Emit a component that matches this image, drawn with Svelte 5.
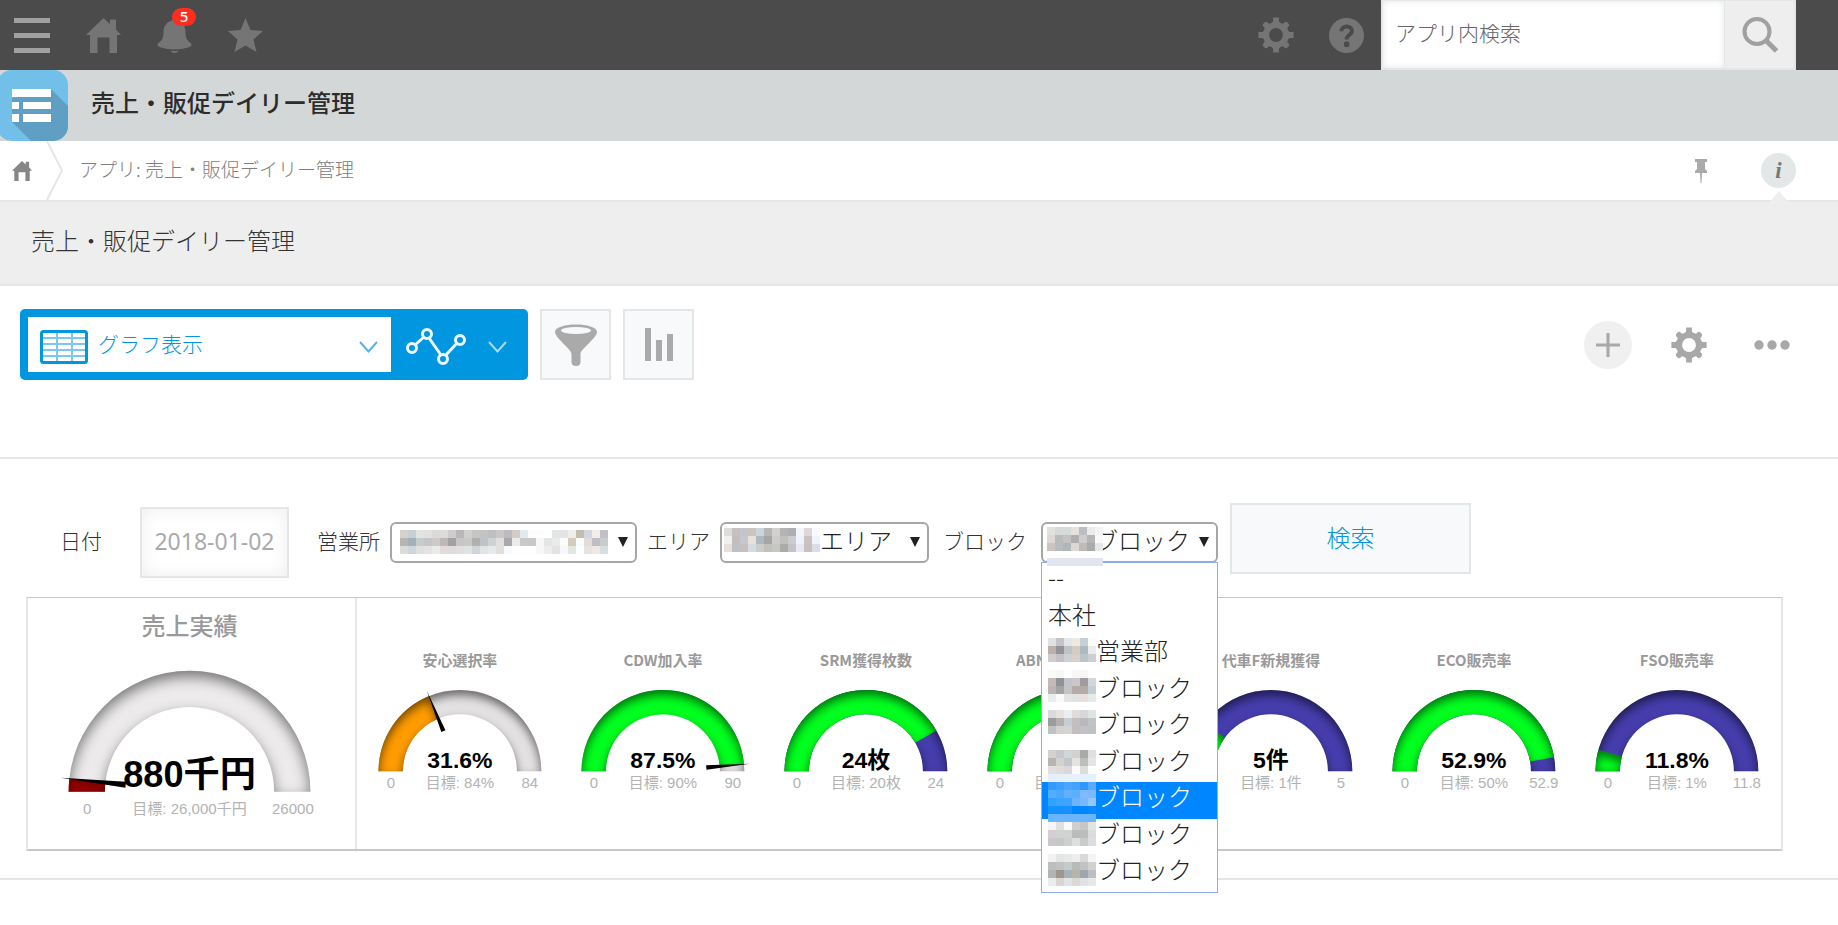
<script>
  let keyword = $state('');
  let date = $state('2018-01-02');
  let office = $state('office');
  let area = $state('area');
  let block = $state('b7');

  const options = [
    { id: 'b1', label: '--' },
    { id: 'b2', label: '本社' },
    { id: 'b3', label: '営業部', masked: true },
    { id: 'b4', label: 'ブロック', masked: true },
    { id: 'b5', label: 'ブロック', masked: true },
    { id: 'b6', label: 'ブロック', masked: true },
    { id: 'b7', label: 'ブロック', masked: true },
    { id: 'b8', label: 'ブロック', masked: true },
    { id: 'b9', label: 'ブロック', masked: true }
  ];

  const GREEN = '#00ff1e';
  const PURPLE = '#453dac';
  const GRAY = '#e4e1e3';

  const gauges = [
    { title: '安心選択率', value: '31.6%', goal: '84%', max: '84', rate: 0.376, color: '#ff9c00', rest: GRAY, needle: true },
    { title: 'CDW加入率', value: '87.5%', goal: '90%', max: '90', rate: 0.972, color: GREEN, rest: GRAY, needle: true },
    { title: 'SRM獲得枚数', value: '24枚', goal: '20枚', max: '24', rate: 0.833, color: GREEN, rest: PURPLE },
    { title: 'ABN新規獲得数', value: '', goal: '20枚', max: '', rate: 0.833, color: GREEN, rest: PURPLE },
    { title: '代車F新規獲得', value: '5件', goal: '1件', max: '5', rate: 0.2, color: GREEN, rest: PURPLE },
    { title: 'ECO販売率', value: '52.9%', goal: '50%', max: '52.9', rate: 0.945, color: GREEN, rest: PURPLE },
    { title: 'FSO販売率', value: '11.8%', goal: '1%', max: '11.8', rate: 0.0847, color: GREEN, rest: PURPLE }
  ];

  function point(cx, cy, r, rate) {
    const a = Math.PI * (1 - rate);
    return [cx + r * Math.cos(a), cy - r * Math.sin(a)];
  }

  function ring(cx, cy, r, from, to) {
    const inner = r * 0.7;
    const [ax, ay] = point(cx, cy, r, from);
    const [bx, by] = point(cx, cy, r, to);
    const [ex, ey] = point(cx, cy, inner, to);
    const [dx, dy] = point(cx, cy, inner, from);
    return `M${ax} ${ay}A${r} ${r} 0 0 1 ${bx} ${by}L${ex} ${ey}A${inner} ${inner} 0 0 0 ${dx} ${dy}Z`;
  }

  function needlePath(cx, cy, r, rate, base, half) {
    const a = Math.PI * (1 - rate);
    const [tx, ty] = point(cx, cy, r * 1.07, rate);
    const [bx, by] = point(cx, cy, base, rate);
    const nx = Math.sin(a) * half;
    const ny = Math.cos(a) * half;
    return `M${tx} ${ty}L${bx + nx} ${by + ny}L${bx - nx} ${by - ny}Z`;
  }

  const officeMask = [
    'd3d2cf c6cfd2 e2e4e4 e3e1e0 dbdada dcdcdb cfcccd b9b7b8 d0d0cf c6c6c6 c3c3c1 bebfc0 c8c8c8 bcbabe d2ccc9 e2e9f0 fdfdfd fdfdfd fefefc e4e6e6 e3e4e3 eeeeec c4baae d0d7e0 f2ede8 c2bfc7 eef5fa',
    'b7b5b1 a6b0bb c6ccce c3c6c7 cdcbca bdb7b9 a5a1a2 c6c6c4 c8c8c6 b0b0b0 bdc3c7 d0d1d1 e2e0df aaa8ab ebebea c9c9c9 c8c8c8 f7f7f7 e4e5e5 e9ebeb fbfdfd d5cabb f7fcfe e4dcd6 bfbec7 c9cbcc',
    'dadcd5 cfd7dd dfe1e1 e4e2e2 ebebec e3dada dfdadb e0dfde e0e3e3 d0d5da e2e3e3 e7e9ea e2dedc f8fafb fefefe fefefe fefefe f7f7f7 ededeb e2e3e3 f8f8f8 e4e5e5 fefefe e4e3e2 efe8e4 d8dde0'
  ];
  const areaMask = [
    'dbdcdb c4c1c0 c3c5c8 c8c5bf ccd5de b8b5b5 d2d1d0 b2b5b3 adaeb1 f2f5fc dfd8d8 f9fafe',
    'f1f0ee c2bebd c5c7cb e7e1d9 aeb8c1 a5a6a0 cdccca bfc0bb cccbcf edf2fc cbc1c1 eff3fd',
    'e8dfda bfc0c3 c2c1c0 d4dbe1 cbcdca c0c0be c5c7c4 abaca8 c4c4c7 e4e9f3 c9bec0 d9dde8'
  ];
  const blockMask = [
    'e1e1e0 d7d9d9 d5dada e6e1de bdbec2 ecebea f4f4f4',
    'ded7d3 babcbc c4c3c4 b0aeae d1cdcc b5b5b7 f9f9fa',
    'c9c4bf b9bcbe b0b5b9 dcd7d3 bcbbba a9aaa9 e5e7e9'
  ];
  const listMask = {
    0: 'e2e1e1 c5c3c6 e3e5e8 efe8df c4d0d5 fbfbfa',
    1: 'bbb0aa 929297 bec3c6 d5cbc4 aeb9c1 ebecec',
    2: 'd1cdcf c4c1c5 cdd1d3 d9cfc9 b9c4cb d0ced1',
    4: 'fafafa f6f6f6 fdfdfd f7f7f7 f6f6f5 fdfdfd',
    5: 'c3bab9 929194 c1c4cb cbc8ca 9f9b9e d4d6d9',
    6: 'b8b7b3 a3a3a3 c4c4c6 b5aaa8 b2aba8 c3cfd4',
    7: 'e9eceb fafaf8 e4e4e4 e2e2e2 e7e0dd e6eae9',
    9: 'dadadb e7e2e1 e9f0f1 e0dcdc d7d6d8 dfe4e4',
    10: '9d9c9d b5afae c4ced3 c5bebe b9b9bd c0c4c6',
    11: 'bfc2c3 d4d3d2 d5d4d4 c4bdbf c2c1c4 bdc2c4',
    14: 'd2d1cf c4c9cb d3d6d7 d4d0ce a9aba8 dfe0e3',
    15: 'b9b4ae d3d2d0 c3c7ca e4e2e2 bcbebb e5e5e6',
    16: 'e2e0de dfddda dbd8dc fcfafa dddddc fefefe',
    17: 'e4f0fe e4f0fe e6f1fe e6f1fe e6f1fe e6f1fe',
    18: '3399ff 3f9fff 4ba5ff 44a2ff 2d98ff 5aaaff',
    19: '55adff 49a8ff 61b0ff 5aafff 7dbaff 7ab8ff',
    20: '32a0ff 3ba4ff 40a3ff 6bb2ff 79b8ff 92c8ff',
    21: '1791ff 1590ff 1791ff 0086ff 0086ff 0a8aff',
    22: '69b5ff 69b5ff 69b5ff 69b5ff 69b5ff 69b5ff',
    23: 'f6f6f6 dfe0e3 fafafa cfcfce c6c8c7 e3e3e4',
    24: 'd5ced2 d1d3d2 d0d3d2 bbbcba bcbebd dadbdc',
    25: 'cac8ca c6c8c8 cdd0cf dddedf c8cbca dcddde',
    27: 'f1f3f3 e5e5e5 e7e8e8 ededec d9d9d9 f4f5f5',
    28: 'bebebf c3c2c2 c4cacd b8bab7 c2c2c2 d0d1d2',
    29: 'b2b5b5 9f9690 a7b2b7 b7b4ad 9fa5af bdbec1',
    30: 'ebecec d9d5d3 e2e3e4 dcd9d4 e0e2e3 e6e8ea'
  };
</script>

{#snippet mosaic(rows, cls)}
  <svg class={cls} aria-hidden="true" shape-rendering="crispEdges">
    {#each Object.entries(rows) as [y, row]}
      {#each row.split(' ') as c, x}
        <rect x={x * 8} y={y * 8} width="8" height="8" fill={'#' + c} />
      {/each}
    {/each}
  </svg>
{/snippet}

{#snippet gear()}
  <svg width="36" height="36" viewBox="-18 -18 36 36" aria-hidden="true">
    <circle r="9.8" fill="none" stroke="currentColor" stroke-width="5.8" />
    {#each [0, 90, 180, 270] as a}
      <path d="M-5.500-11 L-2.900-13.500 V-17.6 H2.900 V-13.500 L5.500-11Z" fill="currentColor" transform="rotate({a})" />
      <path d="M-5.500-11 L-3-13 V-15.2 Q-2.8-17 0-17 T3-15.2 V-13 L5.500-11Z" fill="currentColor" transform="rotate({a + 45})" />
    {/each}
  </svg>
{/snippet}

{#snippet house(size)}
  <svg width={size} height={size} viewBox="0 0 35 35" aria-hidden="true">
    <path d="M17.500 0 24 6V1.500H30V11.500L35 17H31V35H23.500V19.500H11.500V35H4V17H0Z" fill="currentColor" />
  </svg>
{/snippet}

{#snippet arrow()}
  <svg class="arrow" width="10" height="10" viewBox="0 0 10 10" aria-hidden="true"><path d="M0 0H10L5 10Z" fill="#222" /></svg>
{/snippet}

{#snippet dial(cx, cy, r, g, shadow)}
  <path d={ring(cx, cy, r, 0, 1)} fill={g.rest} filter="url(#{shadow})" />
  <path d={ring(cx, cy, r, 0, g.rate)} fill={g.color} filter="url(#{shadow})" />
{/snippet}

{#snippet insetShadow(id, dy, blur, alpha)}
  <filter {id} x="-10%" y="-10%" width="120%" height="120%" color-interpolation-filters="sRGB">
    <feOffset dx="0" {dy} />
    <feGaussianBlur stdDeviation={blur} result="b" />
    <feComposite operator="out" in="SourceGraphic" in2="b" result="inv" />
    <feFlood flood-color="#000" flood-opacity={alpha} />
    <feComposite operator="in" in2="inv" result="sh" />
    <feComposite operator="over" in="sh" in2="SourceGraphic" />
  </filter>
{/snippet}

<div class="page">
  <svg class="defs" width="0" height="0" aria-hidden="true">
    {@render insetShadow('inset-small', 5, 5, 0.55)}
    {@render insetShadow('inset-big', 6, 7, 0.5)}
  </svg>

  <header class="top">
    <button class="icon menu" aria-label="メニュー"><span></span><span></span><span></span></button>
    <a class="icon" href="#home" aria-label="ホーム">{@render house(35)}</a>
    <button class="icon bell" aria-label="通知">
      <svg width="35" height="35" viewBox="0 0 35 35" aria-hidden="true">
        <path d="M17.500 0C19 0 20 1 20 2.500C26 4 28.500 9 28.500 14C28.500 20 30 22.500 33.500 25C36 27 34 28.500 31 29.500C23 32 12 32 4 29.500C1 28.500-1 27 1.500 25C5 22.500 6.500 20 6.500 14C6.500 9 9 4 15 2.500C15 1 16 0 17.500 0Z" fill="currentColor" />
        <path d="M13.500 32.500Q17.500 33.500 21.500 32.500Q20.500 35 17.500 35T13.500 32.500Z" fill="currentColor" />
      </svg>
      <span class="badge">5</span>
    </button>
    <button class="icon" aria-label="お気に入り">
      <svg width="35" height="35" viewBox="0 0 35 35" aria-hidden="true"><path d="M17.500 0 22.500 12 35 13 25.500 21.500 28.500 34 17.500 27.500 6.500 34 9.500 21.500 0 13 12.500 12Z" fill="currentColor" /></svg>
    </button>
    <div class="spacer"></div>
    <button class="icon" aria-label="設定">{@render gear()}</button>
    <button class="icon help" aria-label="ヘルプ">
      <svg width="35" height="35" viewBox="0 0 35 35" aria-hidden="true">
        <circle cx="17.500" cy="17.500" r="17.500" fill="currentColor" />
        <path d="M12.300 13.200C12.300 7 23 7 23 13C23 17 17.600 16.600 17.600 21.500" fill="none" stroke="#4b4b4b" stroke-width="4" />
        <rect x="15" y="23.500" width="5.400" height="5.400" rx="1.500" fill="#4b4b4b" />
      </svg>
    </button>
    <form class="search" onsubmit={(e) => e.preventDefault()}>
      <input type="text" aria-label="アプリ内検索" placeholder="アプリ内検索" bind:value={keyword} />
      <button aria-label="検索する">
        <svg width="36" height="36" viewBox="0 0 36 36" aria-hidden="true">
          <circle cx="15" cy="14.500" r="12.500" fill="none" stroke="#a0a0a0" stroke-width="4" />
          <path d="M24 23.500 34.500 34" stroke="#a0a0a0" stroke-width="5" />
        </svg>
      </button>
    </form>
  </header>

  <div class="appbar">
    <svg width="68" height="71" viewBox="0 0 68 71" aria-hidden="true">
      <clipPath id="app-shape"><rect x="-3" width="71" height="71" rx="15" /></clipPath>
      <g clip-path="url(#app-shape)">
        <rect x="-3" width="71" height="71" fill="#72bfe9" />
        <path d="M51 19 72 40V71H31L12 52V28Z" fill="#609fc4" />
      </g>
      <path d="M12 19H51V27H12ZM12 32H19V39H12ZM23 32H51V39H23ZM12 44H19V52H12ZM23 44H51V52H23Z" fill="#fff" />
    </svg>
    <h1>売上・販促デイリー管理</h1>
  </div>

  <nav class="crumbs" aria-label="パンくず">
    <a class="root" href="#home" aria-label="ポータル">{@render house(20)}</a>
    <svg class="sep" width="20" height="59" viewBox="0 0 20 59" aria-hidden="true"><path d="M1 0 16 29.500 1 59" fill="none" stroke="#e3e7e8" stroke-width="2" /></svg>
    <a class="current" href="#app">アプリ: 売上・販促デイリー管理</a>
    <div class="spacer"></div>
    <button class="pin" aria-label="固定">
      <svg width="12" height="24" viewBox="0 0 12 24" aria-hidden="true"><path d="M0 0H12V3H10V10L12 12V14H7L6.500 24H5.500L5 14H0V12L2 10V3H0Z" fill="#aaa" /></svg>
    </button>
    <button class="info" aria-label="情報">i</button>
  </nav>

  <section class="headline"><h2>売上・販促デイリー管理</h2></section>

  <section class="toolbar">
    <div class="view">
      <button class="viewname">
        <svg width="48" height="34" viewBox="0 0 48 34" aria-hidden="true">
          <path d="M2 8H46M2 14H46M2 20H46M2 26H46M17 2V32M32 2V32" stroke="#7cc6ef" stroke-width="2" />
          <rect x="1.500" y="1.500" width="45" height="31" rx="2" fill="none" stroke="#0096e0" stroke-width="3" />
        </svg>
        <span>グラフ表示</span>
        <svg width="19" height="12" viewBox="0 0 19 12" aria-hidden="true"><path d="M1 1 9.500 10.500 18 1" fill="none" stroke="#55b3e6" stroke-width="2" /></svg>
      </button>
      <button class="graph" aria-label="グラフ">
        <svg width="60" height="37" viewBox="0 0 60 37" aria-hidden="true" fill="none" stroke="#eef8fd" stroke-width="3">
          <path d="M9 17 18 9M23 10 35 27M40 27 51 15" />
          <circle cx="6" cy="20" r="4.500" /><circle cx="21" cy="6" r="4.500" /><circle cx="37" cy="31" r="4.500" /><circle cx="54" cy="12" r="4.500" />
        </svg>
        <svg width="19" height="12" viewBox="0 0 19 12" aria-hidden="true"><path d="M1 1 9.500 10.500 18 1" fill="none" stroke="#a6dbf6" stroke-width="2" /></svg>
      </button>
    </div>
    <button class="tool" aria-label="絞り込む">
      <svg width="42" height="42" viewBox="0 0 42 42" aria-hidden="true">
        <path d="M0 8C0-2 42-2 42 8C42 14 25.500 25 25.500 30V38Q25.500 42 21 42T16.500 38V30C16.500 25 0 14 0 8Z" fill="#aaa" />
        <ellipse cx="21" cy="6.500" rx="15" ry="3.500" fill="#f7f9fa" />
      </svg>
    </button>
    <button class="tool" aria-label="集計する">
      <svg width="28" height="33" viewBox="0 0 28 33" aria-hidden="true"><path d="M0 0H6V33H0ZM11 12H17V33H11ZM22 6H28V33H22Z" fill="#aaa" /></svg>
    </button>
    <div class="spacer"></div>
    <button class="round" aria-label="追加"><svg width="24" height="24" viewBox="0 0 24 24" aria-hidden="true"><path d="M12 0V24M0 12H24" stroke="#a8a8a8" stroke-width="3" /></svg></button>
    <button class="plain" aria-label="アプリの設定">{@render gear()}</button>
    <button class="plain" aria-label="その他"><svg width="36" height="10" viewBox="0 0 36 10" aria-hidden="true" fill="currentColor"><circle cx="5" cy="5" r="4.700" /><circle cx="18" cy="5" r="4.700" /><circle cx="31" cy="5" r="4.700" /></svg></button>
  </section>

  <main>
    <form class="filters" onsubmit={(e) => e.preventDefault()}>
      <label for="date">日付</label>
      <input id="date" type="text" bind:value={date} />
      <label class="after-date" for="office">営業所</label>
      <div class="pick office">
        <select id="office" bind:value={office}><option value="office"></option></select>
        {@render mosaic(officeMask, 'mask office-mask')}
        {@render arrow()}
      </div>
      <label for="area">エリア</label>
      <div class="pick area">
        <select id="area" bind:value={area}><option value="area">エリア</option></select>
        {@render mosaic(areaMask, 'mask area-mask')}
        {@render arrow()}
      </div>
      <label class="wide" for="block">ブロック</label>
      <div class="pick block">
        <select id="block" bind:value={block}>
          {#each options as o}<option value={o.id}>{o.label}</option>{/each}
        </select>
        {@render mosaic(blockMask, 'mask block-mask')}
        {@render arrow()}
        <ul class="list" role="listbox" aria-label="ブロック">
          {#each options as o}
            <li role="option" aria-selected={o.id === block} class:on={o.id === block} class:masked={o.masked}>{o.label}</li>
          {/each}
        </ul>
        <span class="strip"></span>
        {@render mosaic(listMask, 'mask list-mask')}
      </div>
      <button class="go">検索</button>
    </form>

    <div class="panel">
      <section class="total">
        <svg viewBox="0 0 326 250" role="img" aria-label="売上実績">
          <text class="t-big" x="161" y="37">売上実績</text>
          {@render dial(161, 193, 120.5, { rate: 0.034, color: '#d40000', rest: '#edebeb' }, 'inset-big')}
          <path d={needlePath(161, 193, 120.5, 0.034, 64, 3)} />
          <text class="v-big" x="161" y="188">880千円</text>
          <text class="lab" x="59" y="215">0</text>
          <text class="lab" x="161" y="215">目標: 26,000千円</text>
          <text class="lab" x="264" y="215">26000</text>
        </svg>
      </section>
      <section class="rates">
        {#each gauges as g}
          <svg viewBox="0 0 203 250" role="img" aria-label={g.title}>
            <text class="t" x="101" y="68">{g.title}</text>
            {@render dial(101, 173, 81.5, g, 'inset-small')}
            {#if g.needle}<path d={needlePath(101, 173, 81.5, g.rate, 43.6, 2.2)} />{/if}
            {#if g.value}<text class="v" x="101" y="170">{g.value}</text>{/if}
            <text class="lab" x="32" y="190">0</text>
            <text class="lab" x="101" y="190">目標: {g.goal}</text>
            {#if g.max}<text class="lab" x="171" y="190">{g.max}</text>{/if}
          </svg>
        {/each}
      </section>
    </div>
  </main>
</div>

<style>
  :global(body) {
    margin: 0;
    background: #fff;
    color: #333;
    font-family: 'Noto Sans CJK JP', sans-serif;
    font-weight: 300;
  }
  :global(*) { box-sizing: border-box; }
  .page { min-height: 100vh; padding-bottom: 24px; }
  button, input, select { font: inherit; color: inherit; margin: 0; padding: 0; border: 0; border-radius: 0; background: none; }
  button { cursor: pointer; }
  svg { display: block; flex: none; }
  .defs { position: absolute; }
  a { color: inherit; text-decoration: none; }
  h1, h2 { margin: 0; font-size: 24px; line-height: 36px; }
  .spacer { flex: 1; }

  .top { display: flex; align-items: center; height: 70px; padding: 0 42px 0 14px; background: #4b4b4b; color: #757575; }
  .icon { position: relative; width: 35px; margin-right: 36px; }
  .menu { display: flex; flex-direction: column; gap: 10px; width: 36px; }
  .menu span { height: 5px; background: #a0a0a0; }
  .badge { position: absolute; left: 15px; top: -10px; width: 24px; height: 18px; border-radius: 9px; background: #ff2d20; color: #fff; font: 500 15px/17px 'Noto Sans', sans-serif; text-align: center; }
  .help { margin-right: 17px; }
  .search { display: flex; align-self: stretch; width: 415px; border: 2px solid #e3e7e8; border-top-width: 1px; background: #fff; }
  .search input { flex: 1; min-width: 0; padding: 0 12px 6px; border-right: 1px solid #e3e7e8; box-shadow: inset 0 0 6px #e6e6e6; font-size: 21px; color: #777; }
  .search input::placeholder { color: #666; opacity: 1; }
  .search button { display: grid; place-items: center; width: 69px; background: #eee; }

  .appbar { display: flex; align-items: center; gap: 23px; height: 71px; background: #d3d7d8; color: #2c2c2c; }
  h1 { font-weight: 500; padding-bottom: 8px; }

  .crumbs { display: flex; align-items: center; height: 59px; padding-right: 42px; color: #808080; font-size: 19px; line-height: 28px; }
  .root { padding: 1px 14px 0 12px; color: #868686; }
  .crumbs .sep { margin-right: 13px; }
  .current { padding-bottom: 4px; }
  .pin { margin-right: 54px; }
  .info { position: relative; width: 35px; height: 35px; border-radius: 50%; background: #e3e7e8; color: #777; font: italic bold 23px/32px 'Liberation Serif', serif; }
  .info::after { content: ''; position: absolute; left: 8px; top: 38px; border: 10px solid transparent; border-top: 0; border-bottom: 12px solid #eee; }

  .headline { height: 86px; padding: 20px 31px; background: #eee; border: solid #e3e7e8; border-width: 2px 0; }
  h2 { font-weight: 300; }

  .toolbar { display: flex; align-items: flex-start; height: 173px; padding: 23px 48px 0 20px; border-bottom: 2px solid #e3e7e8; color: #a8a8a8; }
  .view { display: flex; width: 508px; height: 71px; padding: 8px; border-radius: 5px; background: #0096e0; }
  .viewname { display: flex; align-items: center; width: 363px; height: 55px; padding: 4px 13px 0 12px; background: #fff; color: #0096e0; font-size: 21px; }
  .viewname span { flex: 1; padding: 0 0 8px 10px; text-align: left; }
  .graph { flex: 1; display: flex; align-items: center; justify-content: space-between; padding: 4px 13px 0 15px; }
  .tool { display: grid; place-items: center; width: 71px; height: 71px; margin-left: 12px; border: 2px solid #e3e7e8; background: #f7f9fa; }
  .round { display: grid; place-items: center; width: 48px; height: 48px; margin: 12px 3px 0 0; border-radius: 50%; background: #f0f0f0; }
  .plain { display: grid; place-items: center; width: 36px; height: 36px; margin: 18px 2px 0 36px; color: #a8a8a8; }
  .plain:last-child { margin-left: 45px; margin-right: 0; }

  main { padding: 44px 55px 27px 26px; border-bottom: 2px solid #e3e7e8; }
  .filters { display: flex; align-items: center; height: 79px; padding-left: 34px; font-size: 21px; line-height: 32px; }
  label { margin: 0 10px; padding-bottom: 6px; white-space: nowrap; }
  .filters label:first-child { margin: 0 38px 0 0; }
  label.after-date { margin-left: 28px; }
  label.wide { margin: 0 14px; }
  #date { width: 149px; height: 71px; padding-bottom: 4px; border: 2px solid #e3e7e8; box-shadow: inset 0 0 18px #eee; color: #aaa; font: 400 23px/32px 'Noto Sans', sans-serif; text-align: center; }
  .pick { position: relative; height: 41px; }
  .office { width: 247px; }
  .area { width: 209px; }
  .block { width: 177px; }
  select { appearance: none; width: 100%; height: 41px; border: 2px solid #a6a6a6; border-radius: 6px; background: #fff; color: #222; font-size: 24px; line-height: 32px; }
  .area select { padding: 0 0 8px 98px; }
  .block select { padding: 0 0 8px 51px; }
  .arrow { position: absolute; right: 9px; top: 15px; pointer-events: none; }
  .mask { position: absolute; pointer-events: none; }
  .office-mask { left: 10px; top: 8px; width: 208px; height: 24px; }
  .area-mask { left: 4px; top: 6px; width: 96px; height: 24px; }
  .block-mask { left: 6px; top: 5px; width: 56px; height: 24px; }
  .list-mask { z-index: 3; left: 7px; top: 116px; width: 48px; height: 248px; }
  .strip { position: absolute; z-index: 3; left: 6px; top: 36px; width: 56px; height: 8px; background: #e1e5ee; }
  .list { position: absolute; z-index: 2; left: 0; top: 40px; display: grid; grid-auto-rows: 1fr; width: 100%; height: 331px; margin: 0; padding: 0; border: 1px solid #8fb0e6; background: #fff; color: #222; font-size: 24px; line-height: 28px; list-style: none; }
  .list li { padding-left: 6px; }
  .list li.masked { padding-left: 54px; }
  .list li.on { background: #0086ff; color: #fff; }
  .go { width: 241px; height: 71px; margin: 0 0 8px 12px; padding-bottom: 4px; border: 2px solid #e3e7e8; background: #f7f9fa; color: #0096e0; font-size: 24px; line-height: 32px; }

  .panel { display: flex; margin-top: 15px; border: 2px solid #e3e7e8; border-top: 1px solid #c8c8c8; border-bottom: 2px solid #c8c8c8; }
  .total { flex: 328 1 0; border-right: 2px solid #e3e7e8; }
  .rates { flex: 1424 1 0; display: flex; padding: 0 2px; }
  .rates svg { flex: 1; min-width: 0; }
  .total svg { width: 100%; }
  text { text-anchor: middle; font-family: 'Liberation Sans', 'Noto Sans CJK JP', sans-serif; }
  .t, .t-big { font-family: 'Noto Sans CJK JP', sans-serif; font-weight: 700; fill: #999; }
  .t { font-size: 15px; }
  .t-big { font-size: 24px; font-weight: 500; }
  .v, .v-big { font-weight: 700; fill: #010101; }
  .v { font-size: 23px; }
  .v-big { font-size: 36px; }
  .lab { font-size: 15px; font-weight: 400; fill: #b3b3b3; }
</style>
